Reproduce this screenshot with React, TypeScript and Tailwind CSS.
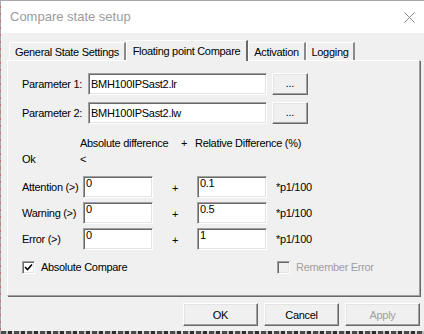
import { useState } from 'react'

const font = "font-['Liberation_Sans',Arial,sans-serif]"

// classic 3D bevels
const sunken =
  'border border-t-[#a0a0a0] border-l-[#a0a0a0] border-r-white border-b-white shadow-[inset_1px_1px_0_#696969,inset_-1px_-1px_0_#e3e3e3]'
const raised =
  'border border-t-white border-l-white border-r-[#696969] border-b-[#696969] shadow-[inset_-1px_-1px_0_#a0a0a0,inset_1px_1px_0_#e3e3e3]'

function TextBox({ value, width, top }: { value: string; width: string; top?: boolean }) {
  return (
    <div
      className={`${sunken} ${width} h-[22px] bg-white flex ${top ? 'items-start' : 'items-center'} pl-[2px] text-[11px] leading-[12px] text-black tracking-[-0.3px]`}
    >
      {value}
    </div>
  )
}

function Check({ checked, disabled, label }: { checked: boolean; disabled?: boolean; label: string }) {
  return (
    <div className="flex items-center h-[14px]">
      <div
        className={`${sunken} w-[13px] h-[13px] flex items-center justify-center ${disabled ? 'bg-[#f0f0f0]' : 'bg-white'}`}
      >
        {checked && (
          <svg width="9" height="9" viewBox="0 0 9 9">
            <path d="M1 4 L3.5 6.5 L8 1.5" stroke="#000" strokeWidth="1.6" fill="none" />
          </svg>
        )}
      </div>
      <span className={`ml-[6px] ${disabled ? 'text-[#a0a0a0]' : 'text-black'}`}>{label}</span>
    </div>
  )
}

const tabs = [
  { label: 'General State Settings', w: 'w-[117px]' },
  { label: 'Floating point Compare', w: 'w-[122px]' },
  { label: 'Activation', w: 'w-[58px]' },
  { label: 'Logging', w: 'w-[49px]' },
]

const levels = [
  { label: 'Attention (>)', abs: '0', rel: '0.1' },
  { label: 'Warning (>)', abs: '0', rel: '0.5' },
  { label: 'Error (>)', abs: '0', rel: '1' },
]

export default function App() {
  const [active] = useState(1)

  return (
    <div
      className={`${font} relative w-[424px] h-[334px] overflow-hidden bg-[#f0f0f0] border-t border-[#a8a8a8] flex`}
    >
      {/* left window edge */}
      <div className="w-px h-full bg-[repeating-linear-gradient(to_bottom,#a8a8a8_0px,#a8a8a8_5px,#c87070_5px,#c87070_7px)]" />

      <div className="flex-1 flex flex-col text-[11px] leading-[14px] tracking-[-0.3px]">
        {/* title bar */}
        <div className="h-[32px] bg-white flex items-center pl-[9px] pr-[9px]">
          <span className="text-[13px] tracking-normal text-[#9b9b9b]">Compare state setup</span>
          <svg className="ml-auto" width="11" height="11" viewBox="0 0 11 11">
            <path d="M0.5 0.5 L10.5 10.5 M10.5 0.5 L0.5 10.5" stroke="#8a8a8a" strokeWidth="1" />
          </svg>
        </div>

        {/* tabs */}
        <div className="mt-[7px] ml-[8px] h-[20px] flex items-end relative z-10">
          {tabs.map((t, i) =>
            i === active ? (
              <div
                key={t.label}
                className={`${t.w} h-[21px] -mb-px bg-[#f0f0f0] border-t border-l border-white border-r-2 border-r-[#696969] rounded-tl-[2px] flex items-start justify-center pt-[3px] text-black whitespace-nowrap`}
              >
                {t.label}
              </div>
            ) : (
              <div
                key={t.label}
                className={`${t.w} h-[18px] bg-[#f0f0f0] border-t border-l border-white border-r-2 border-r-[#8a8a8a] rounded-tl-[2px] flex items-center justify-center pt-[1px] text-black whitespace-nowrap`}
              >
                {t.label}
              </div>
            )
          )}
        </div>

        {/* tab page */}
        <div className="ml-[6px] w-[413px] h-[236px] border-t border-l border-white border-r border-b border-r-[#a0a0a0] border-b-[#a0a0a0] shadow-[1px_1px_0_#696969] pl-[14px] flex flex-col text-black">
          {['BMH100IPSast2.lr', 'BMH100IPSast2.lw'].map((v, i) => (
            <div key={v} className={`flex items-center ${i === 0 ? 'mt-[12px]' : 'mt-[7px]'}`}>
              <span className="w-[66px]">Parameter {i + 1}:</span>
              <TextBox value={v} width="w-[179px]" />
              <button className={`${raised} ml-[5px] w-[36px] h-[22px] bg-[#f0f0f0] flex items-center justify-center pb-[2px] text-black`}>
                ...
              </button>
            </div>
          ))}

          <div className="mt-[12px] flex h-[14px] items-center">
            <span className="ml-[58px] w-[98px]">Absolute difference</span>
            <span className="w-[12px] text-center">+</span>
            <span className="ml-[5px]">Relative Difference (%)</span>
          </div>

          <div className="mt-[2px] flex h-[14px] items-center">
            <span className="w-[58px]">Ok</span>
            <span>&lt;</span>
          </div>

          {levels.map((l, i) => (
            <div key={l.label} className={`flex items-center ${i === 0 ? 'mt-[10px]' : 'mt-[4px]'}`}>
              <span className="w-[61px] whitespace-nowrap">{l.label}</span>
              <TextBox value={l.abs} width="w-[70px]" top />
              <span className="w-[44px] text-center pt-[2px]">+</span>
              <TextBox value={l.rel} width="w-[70px]" top />
              <span className="ml-[9px]">*p1/100</span>
            </div>
          ))}

          <div className="mt-[10px] flex items-center">
            <div className="w-[255px]">
              <Check checked label="Absolute Compare" />
            </div>
            <Check checked={false} disabled label="Remember Error" />
          </div>
        </div>

        {/* dialog buttons */}
        <div className="mt-[7px] pr-[4px] flex justify-end gap-[6px]">
          {['OK', 'Cancel', 'Apply'].map((b) => (
            <button
              key={b}
              className={`${raised} w-[75px] h-[23px] bg-[#f0f0f0] flex items-center justify-center ${b === 'Apply' ? 'text-[#a0a0a0]' : 'text-black'}`}
            >
              {b}
            </button>
          ))}
        </div>

        {/* what shows below the window */}
        <div className="mt-auto h-[3px] bg-[repeating-linear-gradient(to_right,#4a4a4a_0px,#4a4a4a_5px,#bdbdbd_5px,#bdbdbd_7px,#2e2e2e_7px,#2e2e2e_11px,#d8d8d8_11px,#d8d8d8_13px)]" />
      </div>
    </div>
  )
}
